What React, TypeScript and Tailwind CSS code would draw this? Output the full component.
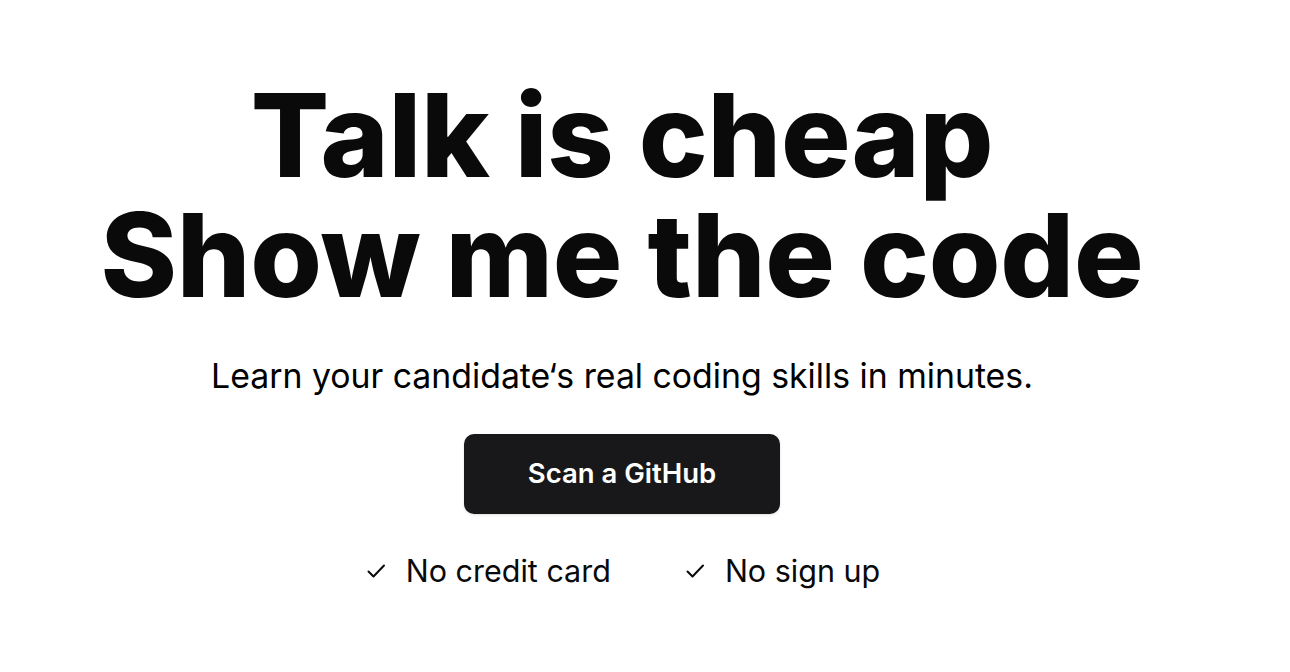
import React from 'react';

function Check() {
  return (
    <svg width="24" height="24" viewBox="0 0 24 24" fill="none" stroke="currentColor" strokeWidth="2" strokeLinecap="round" strokeLinejoin="round">
      <path d="M4.5 12.5l5 5L20 6.5" />
    </svg>
  );
}

export default function App() {
  return (
    <div className="min-h-screen bg-white text-[#0a0a0b]" style={{ fontFamily: 'Inter, "Noto Sans", sans-serif' }}>
      <div className="w-[1244px] flex flex-col items-center pt-[75px]">
        <h1 className="text-center text-[116px] leading-[120px] font-extrabold tracking-[-0.002em]">
          Talk is cheap
          <br />
          Show me the code
        </h1>
        <p className="mt-[41px] text-[33.8px] leading-[40px] text-black">
          Learn your candidate‘s real coding skills in minutes.
        </p>
        <button className="mt-[38px] w-[316px] h-[80px] rounded-[10px] bg-[#18181b] text-white text-[27.5px] font-semibold shadow-sm">
          Scan a GitHub
        </button>
        <div className="mt-[37px] flex items-center gap-[72px] text-[30.5px] leading-[40px]">
          <div className="flex items-center gap-[18px]">
            <Check />
            <span>No credit card</span>
          </div>
          <div className="flex items-center gap-[18px]">
            <Check />
            <span>No sign up</span>
          </div>
        </div>
      </div>
    </div>
  );
}
